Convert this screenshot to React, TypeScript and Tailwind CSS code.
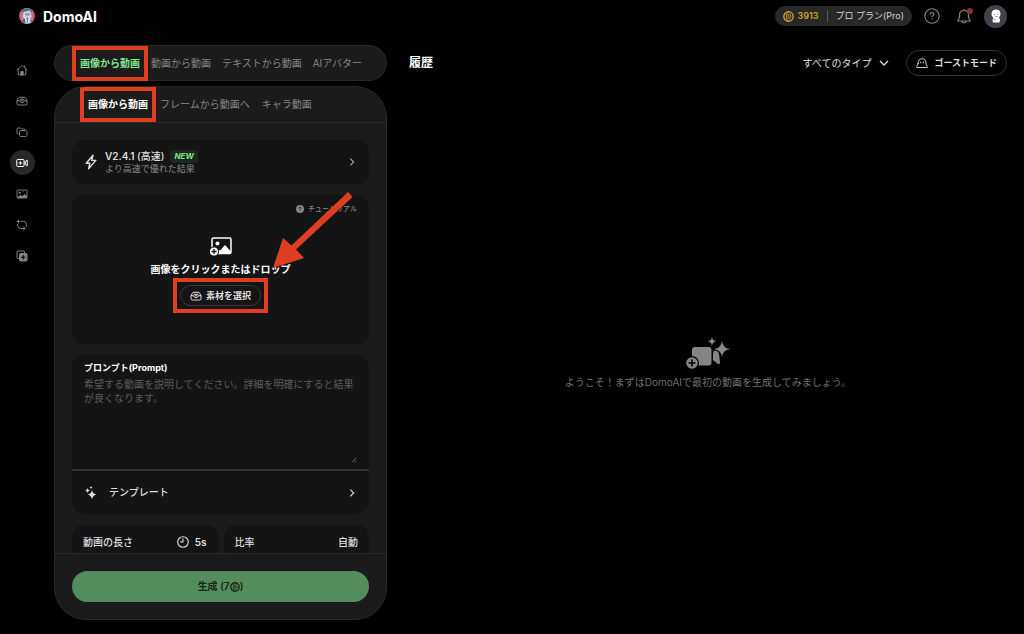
import React, { useState } from 'react';
import clsx from 'clsx';

type IconProps = { className?: string };

const MODES = ['画像から動画', '動画から動画', 'テキストから動画', 'AIアバター'];
const SUB_MODES = ['画像から動画', 'フレームから動画へ', 'キャラ動画'];

function HomeIcon({ className }: IconProps) {
  return (
    <svg viewBox="0 0 24 24" className={className} fill="none" stroke="currentColor" strokeWidth="1.8" strokeLinejoin="round" strokeLinecap="round">
      <path d="M2 12 12 3l10 9M4.5 10v11.5h15V10M17.5 7V3.5" />
      <path d="M9.5 21.5V15h5v6.500z" fill="currentColor" />
    </svg>
  );
}

function TrayIcon({ className }: IconProps) {
  return (
    <svg viewBox="0 0 24 24" className={className} fill="none" stroke="currentColor" strokeWidth="2" strokeLinejoin="round" strokeLinecap="round">
      <path d="M2 12.500 4.500 6.500Q5.200 4.500 7.500 4.500h9q2.300 0 3 2l2.500 6v5q0 2.500-2.500 2.500h-15Q2 20 2 17.500z" />
      <path d="M2 11.500h5.500q1 4 4.500 4t4.500-4H22M8 8.500h8M10 11.500h4" />
    </svg>
  );
}

function StackIcon({ className }: IconProps) {
  return (
    <svg viewBox="0 0 24 24" className={className} fill="none" stroke="currentColor" strokeWidth="1.8" strokeLinejoin="round">
      <rect x="7" y="9" width="15" height="12" rx="2.500" />
      <path d="M4.500 16.500Q2 16 2 14V6.500Q2 4 4.500 4H9l2 2h5q2 0 2.500 3" />
    </svg>
  );
}

function VideoPlusIcon({ className }: IconProps) {
  return (
    <svg viewBox="0 0 24 24" className={className} fill="none" stroke="currentColor" strokeWidth="2" strokeLinejoin="round">
      <rect x="1.500" y="5" width="14.500" height="14" rx="1.500" />
      <path d="M8.750 8.500v7M5.250 12h7M16 12h2.500M22.500 6.500 18.500 9v6l4 2.500z" />
    </svg>
  );
}

function PictureIcon({ className }: IconProps) {
  return (
    <svg viewBox="0 0 24 24" className={className} fill="none" stroke="currentColor" strokeWidth="1.800">
      <rect x="2" y="4" width="20" height="16" rx="1" />
      <path d="m3 19 6-4 4 2 4-4 4 3v3z" fill="currentColor" />
      <path d="M7.500 7v5M5 9.500h5M13 7.500h2" />
    </svg>
  );
}

function CycleIcon({ className }: IconProps) {
  return (
    <svg viewBox="0 0 24 24" className={className} fill="none" stroke="currentColor" strokeWidth="2" strokeLinecap="round" strokeLinejoin="round">
      <path d="M11 4.500h4q6 .5 6 7 0 3-2 4.500M3 11q-.5 7 6.500 8h8M5 2v6M2 5h6" />
      <path d="m14.500 15.500 3.500 3.500-3.500 3.500" />
    </svg>
  );
}

function LayersIcon({ className }: IconProps) {
  return (
    <svg viewBox="0 0 24 24" className={className} fill="none" stroke="currentColor" strokeWidth="2">
      <path d="M6 17H4q-2 0-2-2V4q0-2 2-2h11q2 0 2 2v2" />
      <rect x="7" y="7" width="15" height="15" rx="2" fill="currentColor" />
      <path d="M14.500 10v9M10 14.500h9" stroke="#000" />
    </svg>
  );
}

function CoinIcon({ className }: IconProps) {
  return (
    <svg viewBox="0 0 20 20" className={className} fill="none" stroke="currentColor">
      <circle cx="10" cy="10" r="8.500" strokeWidth="2.600" />
      <path d="M6.500 5.500H10q4.500 0 4.500 4.500T10 14.500H6.500z" strokeWidth="1.500" />
      <path d="M9 8.200v3.600h.7q1.800 0 1.800-1.800T9.700 8.200z" strokeWidth="1.200" />
    </svg>
  );
}

function GhostIcon({ className }: IconProps) {
  return (
    <svg viewBox="0 0 24 24" className={className} fill="none" stroke="currentColor" strokeWidth="1.800" strokeLinejoin="round" strokeLinecap="round">
      <path d="M4 13q0-9.500 8-9.500T20 13q0 3 2.500 5.500v2.500H1.500v-2.500Q4 16 4 13z" />
      <path d="M9.500 10v2M14.500 10v2" />
    </svg>
  );
}

function BoltIcon({ className }: IconProps) {
  return (
    <svg viewBox="0 0 16 20" className={className} fill="none" stroke="currentColor" strokeWidth="1.800" strokeLinejoin="round">
      <path d="M10.500 1.500 2 11.500h4.500L5 18.500l9-10.500H9z" />
    </svg>
  );
}

function Chevron({ className }: IconProps) {
  return (
    <svg viewBox="0 0 12 12" className={className} fill="none" stroke="currentColor" strokeWidth="1.300">
      <path d="m4 2 4 4-4 4" />
    </svg>
  );
}

function UploadIcon({ className }: IconProps) {
  return (
    <svg viewBox="0 0 24 20" className={className} fill="none">
      <rect x="3" y="1" width="19" height="15.500" rx="1.500" stroke="#fff" strokeWidth="1.500" />
      <circle cx="8.500" cy="6.500" r="2" fill="#fff" />
      <path d="M8 16q0-3 3.500-3l4-4.500q.5-.5 1 0l5 5.500V16.500z" fill="#fff" />
      <circle cx="5" cy="14.500" r="5" fill="#141414" />
      <circle cx="5" cy="14.500" r="4" fill="#fff" />
      <path d="M5 12v5M2.500 14.500h5" stroke="#141414" strokeWidth="1.300" />
    </svg>
  );
}

function SparkleIcon({ className }: IconProps) {
  return (
    <svg viewBox="0 0 24 28" className={className} fill="currentColor">
      <path d="M14 8q1.500 8 9 9-7.500 1.500-9 10-1.500-8.500-9-10 7.500-1 9-9z" />
      <path d="M5 4q.8 4.200 5 5-4.200.8-5 5-.8-4.200-5-5 4.200-.8 5-5zM12 0q.5 2.500 3 3-2.500.5-3 3-.5-2.500-3-3 2.500-.5 3-3z" />
    </svg>
  );
}

function EmptyVideoIcon({ className }: IconProps) {
  return (
    <svg viewBox="0 0 44 32" className={className} fill="currentColor">
      <rect x="6" y="10" width="19.500" height="18.500" rx="3" />
      <path d="M27 16q0-2.500 2-2.500 3 0 4 3.500l1 8.500q0 2-2 1.500l-5-4z" />
      <path d="M36 4q1 7 8 8-7 1-8 8-1-7-8-8 7-1 8-8zM26 0q.6 3.700 4.300 4.300Q26.600 5 26 8.700 25.400 5 21.700 4.300 25.400 3.700 26 0z" />
      <circle cx="6" cy="26" r="7" fill="#000" />
      <circle cx="6" cy="26" r="5.800" />
      <path d="M6 22.500v7M2.500 26h7" stroke="#000" strokeWidth="1.600" />
    </svg>
  );
}

function Logo({ className }: IconProps) {
  return (
    <svg viewBox="0 0 32 32" className={className}>
      <defs>
        <linearGradient id="logo-ring" x1="0" x2="1">
          <stop offset="0" stopColor="#d84a78" />
          <stop offset=".5" stopColor="#a9b8cf" />
          <stop offset="1" stopColor="#cf4763" />
        </linearGradient>
      </defs>
      <circle cx="16" cy="16" r="16" fill="url(#logo-ring)" />
      <path d="M4 5q12-9 23 0l-4 5H8zM5 26q11 10 22 0l-6-4H9z" fill="#51747c" />
      <path d="M9 8 22 5l3 13-3 2 1 10-10 1-1-10-4-3z" fill="#d5d9e5" />
      <path d="m12 10 9-1 1 7-9 1z" fill="#a3acc4" />
      <path d="M13.500 13h2m3 0h2M14 21l5-1m-2 1v8" stroke="#4c5370" strokeWidth="1.500" />
    </svg>
  );
}

function Highlight({ className }: IconProps) {
  return <span aria-hidden className={clsx('absolute border-4 border-[#e03e22] pointer-events-none', className)} />;
}

const NAV = [
  { label: 'ホーム', icon: HomeIcon },
  { label: '素材', icon: TrayIcon },
  { label: 'コレクション', icon: StackIcon },
  { label: '動画', icon: VideoPlusIcon },
  { label: '画像', icon: PictureIcon },
  { label: '変換', icon: CycleIcon },
  { label: '編集', icon: LayersIcon },
];

function Header() {
  return (
    <header className="flex items-center justify-between h-8 pl-[19px] pr-[17px] shrink-0">
      <a href="#" className="flex items-center gap-2">
        <Logo className="size-4" />
        <span className="text-[14px] font-bold">DomoAI</span>
      </a>
      <div className="flex items-center gap-3">
        <button className="flex items-center h-5 px-2 rounded-full bg-[#282828]">
          <CoinIcon className="size-[11px] text-[#c9a22e]" />
          <span className="ml-1 text-[9px] font-semibold text-[#c9a22e]">3913</span>
          <span className="mx-2 w-px h-3 bg-[#555]" />
          <span className="text-[9px] text-[#d4d4d4]">プロ プラン(Pro)</span>
        </button>
        <button aria-label="ヘルプ" className="text-[#858585]">
          <svg viewBox="0 0 16 16" className="size-4" fill="none" stroke="currentColor" strokeWidth="1.100">
            <circle cx="8" cy="8" r="7.200" />
            <path d="M6.200 6.500q.1-1.900 1.900-1.900 1.700 0 1.700 1.600 0 .9-.9 1.500-.8.500-.8 1.300M8.100 10.500v1" strokeWidth="1.300" />
          </svg>
        </button>
        <button aria-label="通知" className="relative ml-1 text-[#858585]">
          <svg viewBox="0 0 16 16" className="size-4" fill="none" stroke="currentColor" strokeWidth="1.200" strokeLinejoin="round">
            <path d="M8 1v1.500M3.500 9.500V7q0-4.500 4.500-4.500T12.500 7v2.500l1.800 3.500H1.700zM6 13.500q.3 1.500 2 1.500t2-1.500" />
          </svg>
          <span className="absolute top-0 -right-px size-1.5 rounded-full bg-[#8c3030]" />
        </button>
        <button aria-label="アカウント" className="size-[23px] rounded-full bg-[#42434a] flex items-center justify-center">
          <svg viewBox="0 0 16 16" className="size-4">
            <path d="M3.500 5.500Q4 1.500 8 1.500t4.500 4q0 3-1.500 3.800 1.500 2 .5 5.200H5q-1.500-2 .3-4.800Q3.300 8.500 3.500 5.500z" fill="#fff" />
            <path d="M6 6.500h1M9.500 6h1M7.500 8.500h2M5.500 11l2 1" stroke="#666" strokeWidth=".8" />
          </svg>
        </button>
      </div>
    </header>
  );
}

function Sidebar() {
  return (
    <nav className="flex flex-col items-center gap-1.5 w-11 pt-[25px] shrink-0">
      {NAV.map(({ label, icon: Icon }) => (
        <a
          key={label}
          href="#"
          aria-label={label}
          className={clsx(
            'flex items-center justify-center size-[25px] rounded-full',
            label === '動画' ? 'bg-[#282828] text-white' : 'text-[#858585]'
          )}
        >
          <Icon className="size-3" />
        </a>
      ))}
    </nav>
  );
}

function UploadCard() {
  return (
    <div className="relative flex flex-col items-center h-[149px] shrink-0 rounded-xl bg-[#141414]">
      <button className="self-end flex items-center gap-1 mt-2 mr-3 h-3 text-[7px] font-medium text-[#858585]">
        <svg viewBox="0 0 16 16" className="size-2">
          <circle cx="8" cy="8" r="8" fill="currentColor" />
          <path d="M6 6.500Q6 4.500 8 4.500t2 1.700q0 1-1 1.600T8 9.300M8 11v1.500" fill="none" stroke="#141414" strokeWidth="1.500" />
        </svg>
        チュートリアル
      </button>
      <UploadIcon className="w-6 h-5 mt-[22px]" />
      <p className="mt-1 text-[10px] leading-4 font-bold">画像をクリックまたはドロップ</p>
      <button className="relative flex items-center gap-1 h-[21px] mt-2 px-[9px] rounded-full border border-[#3d3d3d] text-[9px] font-bold text-[#dedede]">
        <TrayIcon className="size-3" />
        素材を選択
        <Highlight className="-inset-x-2 -inset-y-2" />
      </button>
      <svg aria-hidden viewBox="0 0 88 88" className="absolute right-3 -top-1 size-[88px] pointer-events-none" fill="#e03e22">
        <path d="M4 77 14 47l8.500 7.500L79 1l4.500 5L27 58.500l8 8.500z" />
      </svg>
    </div>
  );
}

function GeneratePanel() {
  const [mode, setMode] = useState(MODES[0]);
  const [subMode, setSubMode] = useState(SUB_MODES[0]);
  const [prompt, setPrompt] = useState('');

  return (
    <section className="flex flex-col gap-[5px] w-[333px] ml-[10px] shrink-0 min-h-0">
      {/* Mode tabs */}
      <div className="flex items-center gap-[11px] h-9 px-[25px] shrink-0 rounded-full border border-[#292929] bg-[#1b1b1b]">
        {MODES.map((m, i) => (
          <button
            key={m}
            onClick={() => setMode(m)}
            className={clsx('relative text-[10px] whitespace-nowrap', m === mode ? 'font-bold text-[#80e590]' : 'text-[#858585]')}
          >
            {m}
            {i === 0 && <Highlight className="-inset-x-2 -inset-y-[10px]" />}
          </button>
        ))}
      </div>

      <div className="flex flex-col flex-1 min-h-0 overflow-hidden rounded-[32px] border border-[#292929] bg-[#1b1b1b]">
        <div className="flex items-center gap-3 h-9 pl-[33px] pr-4 shrink-0 border-b border-[#292929]">
          {SUB_MODES.map((m, i) => (
            <button
              key={m}
              onClick={() => setSubMode(m)}
              className={clsx('relative text-[10px] whitespace-nowrap', m === subMode ? 'font-bold text-white' : 'text-[#858585]')}
            >
              {m}
              {i === 0 && <Highlight className="-inset-x-2 -inset-y-[10px]" />}
            </button>
          ))}
        </div>

        {/* Settings */}
        <div className="flex flex-col gap-[11px] flex-1 min-h-0 overflow-hidden px-[17px] pt-[17px]">
          <button className="flex items-center h-11 shrink-0 px-3 rounded-xl bg-[#141414] text-left">
            <BoltIcon className="w-[14px] h-4 text-[#dedede]" />
            <span className="flex-1 ml-[7px]">
              <span className="flex items-center gap-1.5 text-[10px] leading-[13px] font-semibold text-[#dedede]">
                <span>V2.4.1 <span className="font-medium">(高速)</span></span>
                <span className="px-1 rounded bg-[#192a1c] text-[8px] font-bold italic text-[#80e590]">NEW</span>
              </span>
              <span className="block text-[9px] leading-3 text-[#858585]">より高速で優れた結果</span>
            </span>
            <Chevron className="size-2.5 text-[#a8a8a8]" />
          </button>

          <UploadCard />

          <div className="shrink-0 overflow-hidden rounded-xl bg-[#141414]">
            <div className="relative flex flex-col h-[116px] pt-1.5 px-3 border-b-2 border-[#333]">
              <label htmlFor="prompt" className="text-[9px] leading-[14px] font-bold">
                プロンプト(Prompt)
              </label>
              <textarea
                id="prompt"
                value={prompt}
                onChange={(e) => setPrompt(e.target.value)}
                placeholder="希望する動画を説明してください。詳細を明確にすると結果が良くなります。"
                className="flex-1 w-full mt-0.5 resize-none bg-transparent outline-none text-[10px] leading-[14px] placeholder:text-[#5c5c5c]"
              />
              <svg aria-hidden viewBox="0 0 8 8" className="absolute right-3 bottom-1.5 size-1.5" stroke="#858585">
                <path d="m1 7 6-6M5 7l2-2" />
              </svg>
            </div>
            <button className="flex items-center w-full h-[43px] px-3 text-[#dedede]">
              <SparkleIcon className="w-[14px] h-[14px]" />
              <span className="flex-1 ml-[11px] text-left text-[10px] font-medium">テンプレート</span>
              <Chevron className="size-2.5" />
            </button>
          </div>

          <div className="grid grid-cols-2 gap-1.5 shrink-0 text-[10px] font-medium text-[#dedede]">
            <button className="flex items-center justify-between h-[34px] px-[11px] rounded-xl bg-[#141414]">
              動画の長さ
              <span className="flex items-center gap-1.5 font-semibold">
                <svg viewBox="0 0 12 12" className="size-3" fill="none" stroke="currentColor" strokeWidth="1.100">
                  <circle cx="6" cy="6" r="5.300" />
                  <path d="M6 2.500V6H3" />
                </svg>
                5s
              </span>
            </button>
            <button className="flex items-center justify-between h-[34px] px-[11px] rounded-xl bg-[#141414]">
              比率
              <span>自動</span>
            </button>
          </div>
        </div>

        <div className="shrink-0 px-[17px] py-[17px] border-t border-[#292929]">
          <button className="flex items-center justify-center w-full h-[31px] rounded-full bg-[#538d5e] text-[10px] font-semibold text-[#142819]">
            生成 (7
            <CoinIcon className="size-2.5" />)
          </button>
        </div>
      </div>
    </section>
  );
}

function History() {
  return (
    <main className="flex flex-col flex-1 min-w-0 pl-[22px] pr-[17px]">
      <div className="flex items-center justify-between h-9">
        <h1 className="text-[12px] font-bold">履歴</h1>
        <div className="flex items-center gap-4">
          <button className="flex items-center gap-[7px] text-[10px] text-[#dedede]">
            すべてのタイプ
            <Chevron className="size-3 rotate-90" />
          </button>
          <button className="flex items-center gap-1.5 h-[26px] px-[9px] rounded-full border border-[#333] text-[9px] font-bold text-[#dedede]">
            <GhostIcon className="size-3" />
            ゴーストモード
          </button>
        </div>
      </div>
      <div className="flex flex-col items-center justify-center gap-1.5 flex-1 pt-[26px] text-[#858585]">
        <EmptyVideoIcon className="w-11 h-8" />
        <p className="text-[10px] text-[#707070]">ようこそ！まずはDomoAIで最初の動画を生成してみましょう。</p>
      </div>
    </main>
  );
}

export default function App() {
  return (
    <div lang="ja" className="flex flex-col h-screen overflow-hidden bg-black text-white font-['Inter','Noto_Sans_CJK_JP',sans-serif]">
      <Header />
      <div className="flex flex-1 min-h-0">
        <Sidebar />
        <div className="flex flex-1 min-w-0 pt-[13px] pb-3.5">
          <GeneratePanel />
          <History />
        </div>
      </div>
    </div>
  );
}
